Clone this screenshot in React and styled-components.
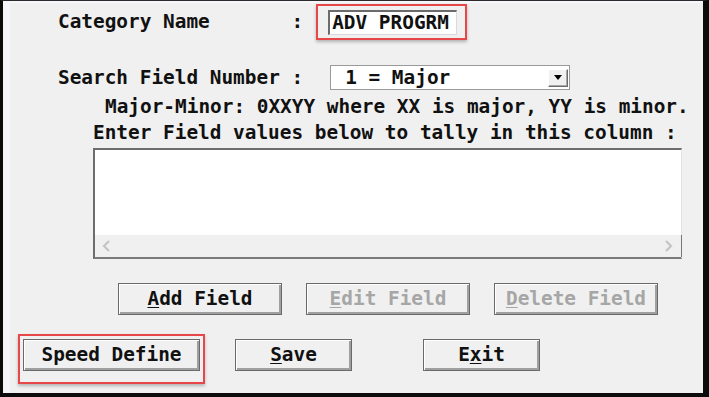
import React from 'react'
import styled, { createGlobalStyle } from 'styled-components'

const GlobalStyle = createGlobalStyle`
  html, body {
    margin: 0;
    padding: 0;
    background: #f0f0f0;
  }
  body {
    font-family: "DejaVu Sans Mono", "Liberation Mono", monospace;
  }
`

function App() {
  return (
    <>
      <GlobalStyle />
      <Window>
        <Body>
          <FieldRow $indent={40} $top={0} $height={36}>
            <Label>{'Category Name       :'}</Label>
            <Highlight $pad="4px 8px 3px 10px" $ml={13}>
              <TextField>ADV PROGRM</TextField>
            </Highlight>
          </FieldRow>

          <FieldRow $indent={40} $top={25} $height={25}>
            <Label>Search Field Number :</Label>
            <Select>
              <SelectValue>1 = Major</SelectValue>
              <ArrowButton>
                <svg width="8" height="5" viewBox="0 0 8 5">
                  <path d="M0 0h8L4 5z" fill="#000" />
                </svg>
              </ArrowButton>
            </Select>
          </FieldRow>

          <Line $indent={87} $top={4}>
            Major-Minor: 0XXYY where XX is major, YY is minor.
          </Line>
          <Line $indent={75}>Enter Field values below to tally in this column :</Line>

          <ListBox>
            <ListArea />
            <HScroll>
              <svg width="12" height="12" viewBox="0 0 12 12">
                <path d="M8 1L3 6l5 5" fill="none" stroke="#c4c4c4" strokeWidth="2.2" />
              </svg>
              <svg width="12" height="12" viewBox="0 0 12 12">
                <path d="M4 1l5 5-5 5" fill="none" stroke="#c4c4c4" strokeWidth="2.2" />
              </svg>
            </HScroll>
          </ListBox>

          <ButtonRow $indent={100} $top={24}>
            <Button $w={164}><Key>A</Key>dd Field</Button>
            <Button $w={164} disabled><Key>E</Key>dit Field</Button>
            <Button $w={164} disabled><Key>D</Key>elete Field</Button>
          </ButtonRow>

          <ButtonRow $indent={0} $top={19}>
            <Highlight $pad="3px 3px 11px 3px">
              <Button $w={177}>Speed Define</Button>
            </Highlight>
            <Button $w={117} $ml={30} $mt={5}><Key>S</Key>ave</Button>
            <Button $w={117} $ml={71} $mt={5}>E<Key>x</Key>it</Button>
          </ButtonRow>
        </Body>
      </Window>
    </>
  )
}

const Window = styled.div`
  box-sizing: border-box;
  width: 709px;
  height: 397px;
  background: #f0f0f0;
  border-top: 1px solid #2a2a2a;
  border-left: 3px solid #0c0c0c;
  border-right: 6px solid #0c0c0c;
  border-bottom: 4px solid #0c0c0c;
  overflow: hidden;
`

const Body = styled.div`
  box-sizing: border-box;
  height: 100%;
  padding: 1px 0 0 8px;
  border-top: 2px solid #f6f7fa;
  border-left: 7px solid #f5f7fb;
  display: flex;
  flex-direction: column;
  align-items: flex-start;
`

const FieldRow = styled.div`
  display: flex;
  align-items: center;
  height: ${p => p.$height}px;
  margin-left: ${p => p.$indent}px;
  margin-top: ${p => p.$top}px;
`

const Label = styled.div`
  font: bold 19.4px/26px "DejaVu Sans Mono", "Liberation Mono", monospace;
  color: #111;
  white-space: pre;
`

const Line = styled.div`
  font: bold 19.4px/26px "DejaVu Sans Mono", "Liberation Mono", monospace;
  color: #111;
  white-space: pre;
  margin-left: ${p => p.$indent}px;
  margin-top: ${p => p.$top || 0}px;
`

const Highlight = styled.div`
  border: 2px solid #e8474a;
  padding: ${p => p.$pad};
  margin-left: ${p => p.$ml || 0}px;
  box-shadow: 0 2px 3px rgba(0, 0, 0, 0.25);
`

const TextField = styled.div`
  box-sizing: border-box;
  width: 129px;
  height: 25px;
  background: #fff;
  border-top: 2px solid #6b6b6b;
  border-left: 2px solid #6b6b6b;
  border-right: 1px solid #dadada;
  border-bottom: 1px solid #dadada;
  padding-left: 2px;
  font: bold 19.4px/22px "DejaVu Sans Mono", "Liberation Mono", monospace;
  color: #111;
  white-space: pre;
`

const Select = styled.div`
  box-sizing: border-box;
  width: 240px;
  height: 25px;
  margin-left: 27px;
  background: #fff;
  border: 1px solid #9a9a9a;
  display: flex;
  align-items: center;
  justify-content: space-between;
  padding: 0 1px 0 14px;
`

const SelectValue = styled.span`
  font: bold 19.4px/23px "DejaVu Sans Mono", "Liberation Mono", monospace;
  color: #111;
  white-space: pre;
`

const ArrowButton = styled.div`
  box-sizing: border-box;
  width: 20px;
  height: 18px;
  background: #f0f0f0;
  border: 1px solid;
  border-color: #fff #6b6b6b #6b6b6b #fff;
  box-shadow: inset -1px -1px 0 #a8a8a8;
  display: flex;
  align-items: center;
  justify-content: center;
`

const ListBox = styled.div`
  box-sizing: border-box;
  width: 589px;
  height: 111px;
  margin: 2px 0 0 75px;
  background: #fff;
  border-top: 2px solid #6d6d6d;
  border-left: 2px solid #6d6d6d;
  border-bottom: 2px solid #7a7a7a;
  border-right: 1px solid #e2e2e2;
  display: flex;
  flex-direction: column;
`

const ListArea = styled.div`
  flex: 1;
`

const HScroll = styled.div`
  height: 22px;
  background: #f0f0f0;
  border-right: 1px solid #777;
  margin-right: -1px;
  display: flex;
  align-items: center;
  justify-content: space-between;
  padding: 0 7px 0 6px;
`

const ButtonRow = styled.div`
  display: flex;
  align-items: flex-start;
  gap: ${p => (p.$indent ? 24 : 0)}px;
  margin-left: ${p => p.$indent}px;
  margin-top: ${p => p.$top}px;
`

const Button = styled.button`
  box-sizing: border-box;
  width: ${p => p.$w}px;
  height: 32px;
  margin-left: ${p => p.$ml || 0}px;
  margin-top: ${p => p.$mt || 0}px;
  padding: 0;
  background: #f0f0f0;
  border: 1px solid #6a6a6a;
  box-shadow: inset 1px 1px 0 #fff, inset -2px -2px 0 #a0a0a0;
  font: bold 19.4px/1 "DejaVu Sans Mono", "Liberation Mono", monospace;
  color: ${p => (p.disabled ? '#a6a6a6' : '#111')};
  white-space: pre;
`

const Key = styled.span`
  text-decoration: underline;
  text-underline-offset: 2px;
`

export default App
